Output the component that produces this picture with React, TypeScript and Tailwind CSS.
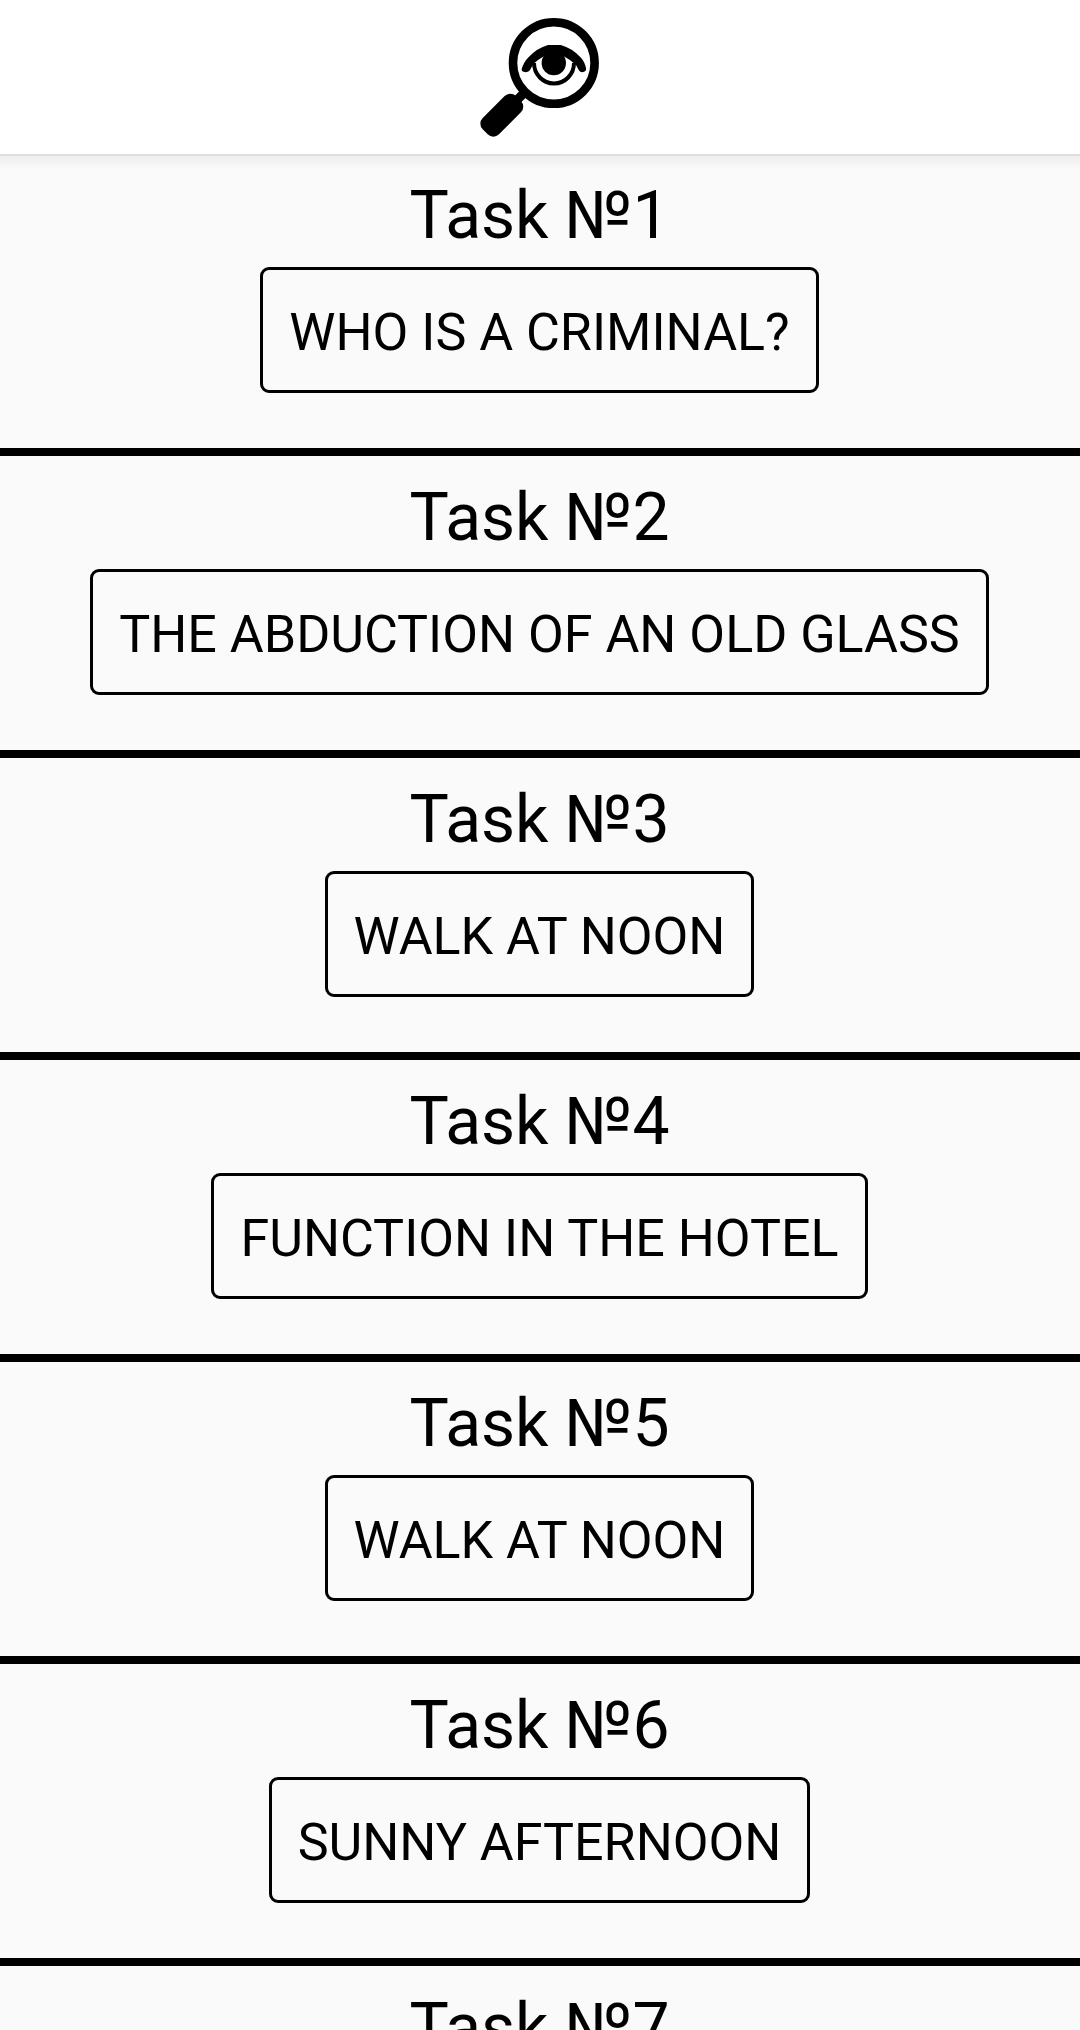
const tasks = [
  "WHO IS A CRIMINAL?",
  "THE ABDUCTION OF AN OLD GLASS",
  "WALK AT NOON",
  "FUNCTION IN THE HOTEL",
  "WALK AT NOON",
  "SUNNY AFTERNOON",
];

function Logo() {
  return (
    <svg width="120" height="122" viewBox="0 0 120 122" fill="none">
      <circle cx="73.8" cy="46" r="40.8" stroke="black" strokeWidth="8.6" />
      <path d="M36 84L46 74" stroke="black" strokeWidth="9" />
      <rect x="-23.5" y="-11.5" width="47" height="23" rx="8" fill="black" transform="translate(21.8 98.2) rotate(-45)" />
      <path
        d="M42 51C44 46 45 44 48 40.7Q57 31 68 28H80.7Q92 31 101 40.7C104 44 105 47 106 51C107 55 101 57 98.7 53L96 48Q91 43 83.3 39H64.5Q57 43 53 47.5L50 53C47 57 40 55 42 51Z"
        fill="black"
      />
      <path d="M54 46A20 20.5 0 0 0 94 46" stroke="black" strokeWidth="4" />
      <circle cx="73.8" cy="46" r="12.2" fill="black" />
    </svg>
  );
}

function TaskTitle({ number }: { number: number }) {
  return <h2 className="h-[90px] text-center text-[66px] leading-[77px] tracking-[-0.1px]">Task №{number}</h2>;
}

export default function App() {
  return (
    <div className="h-[2030px] overflow-hidden bg-[#fafafa] font-[Roboto,sans-serif] text-black">
      <header className="flex h-[154px] items-start justify-center bg-white pt-[17px]">
        <Logo />
      </header>
      <div className="h-[2px] bg-[#dedede]" />
      <div className="h-[14px] bg-gradient-to-b from-[#eeeeee] to-[#fafafa]" />
      <main className="pt-[7px]">
        {tasks.map((task, i) => (
          <section key={i} className="mb-[23px] flex h-[279px] flex-col items-center border-b-[8px] border-black pr-px">
            <TaskTitle number={i + 1} />
            <button className="flex h-[126px] items-center rounded-[9px] border-[3px] border-black px-[26px] pt-[6px] text-[52px]">
              {task}
            </button>
          </section>
        ))}
        <div className="pr-px">
          <TaskTitle number={tasks.length + 1} />
        </div>
      </main>
    </div>
  );
}
